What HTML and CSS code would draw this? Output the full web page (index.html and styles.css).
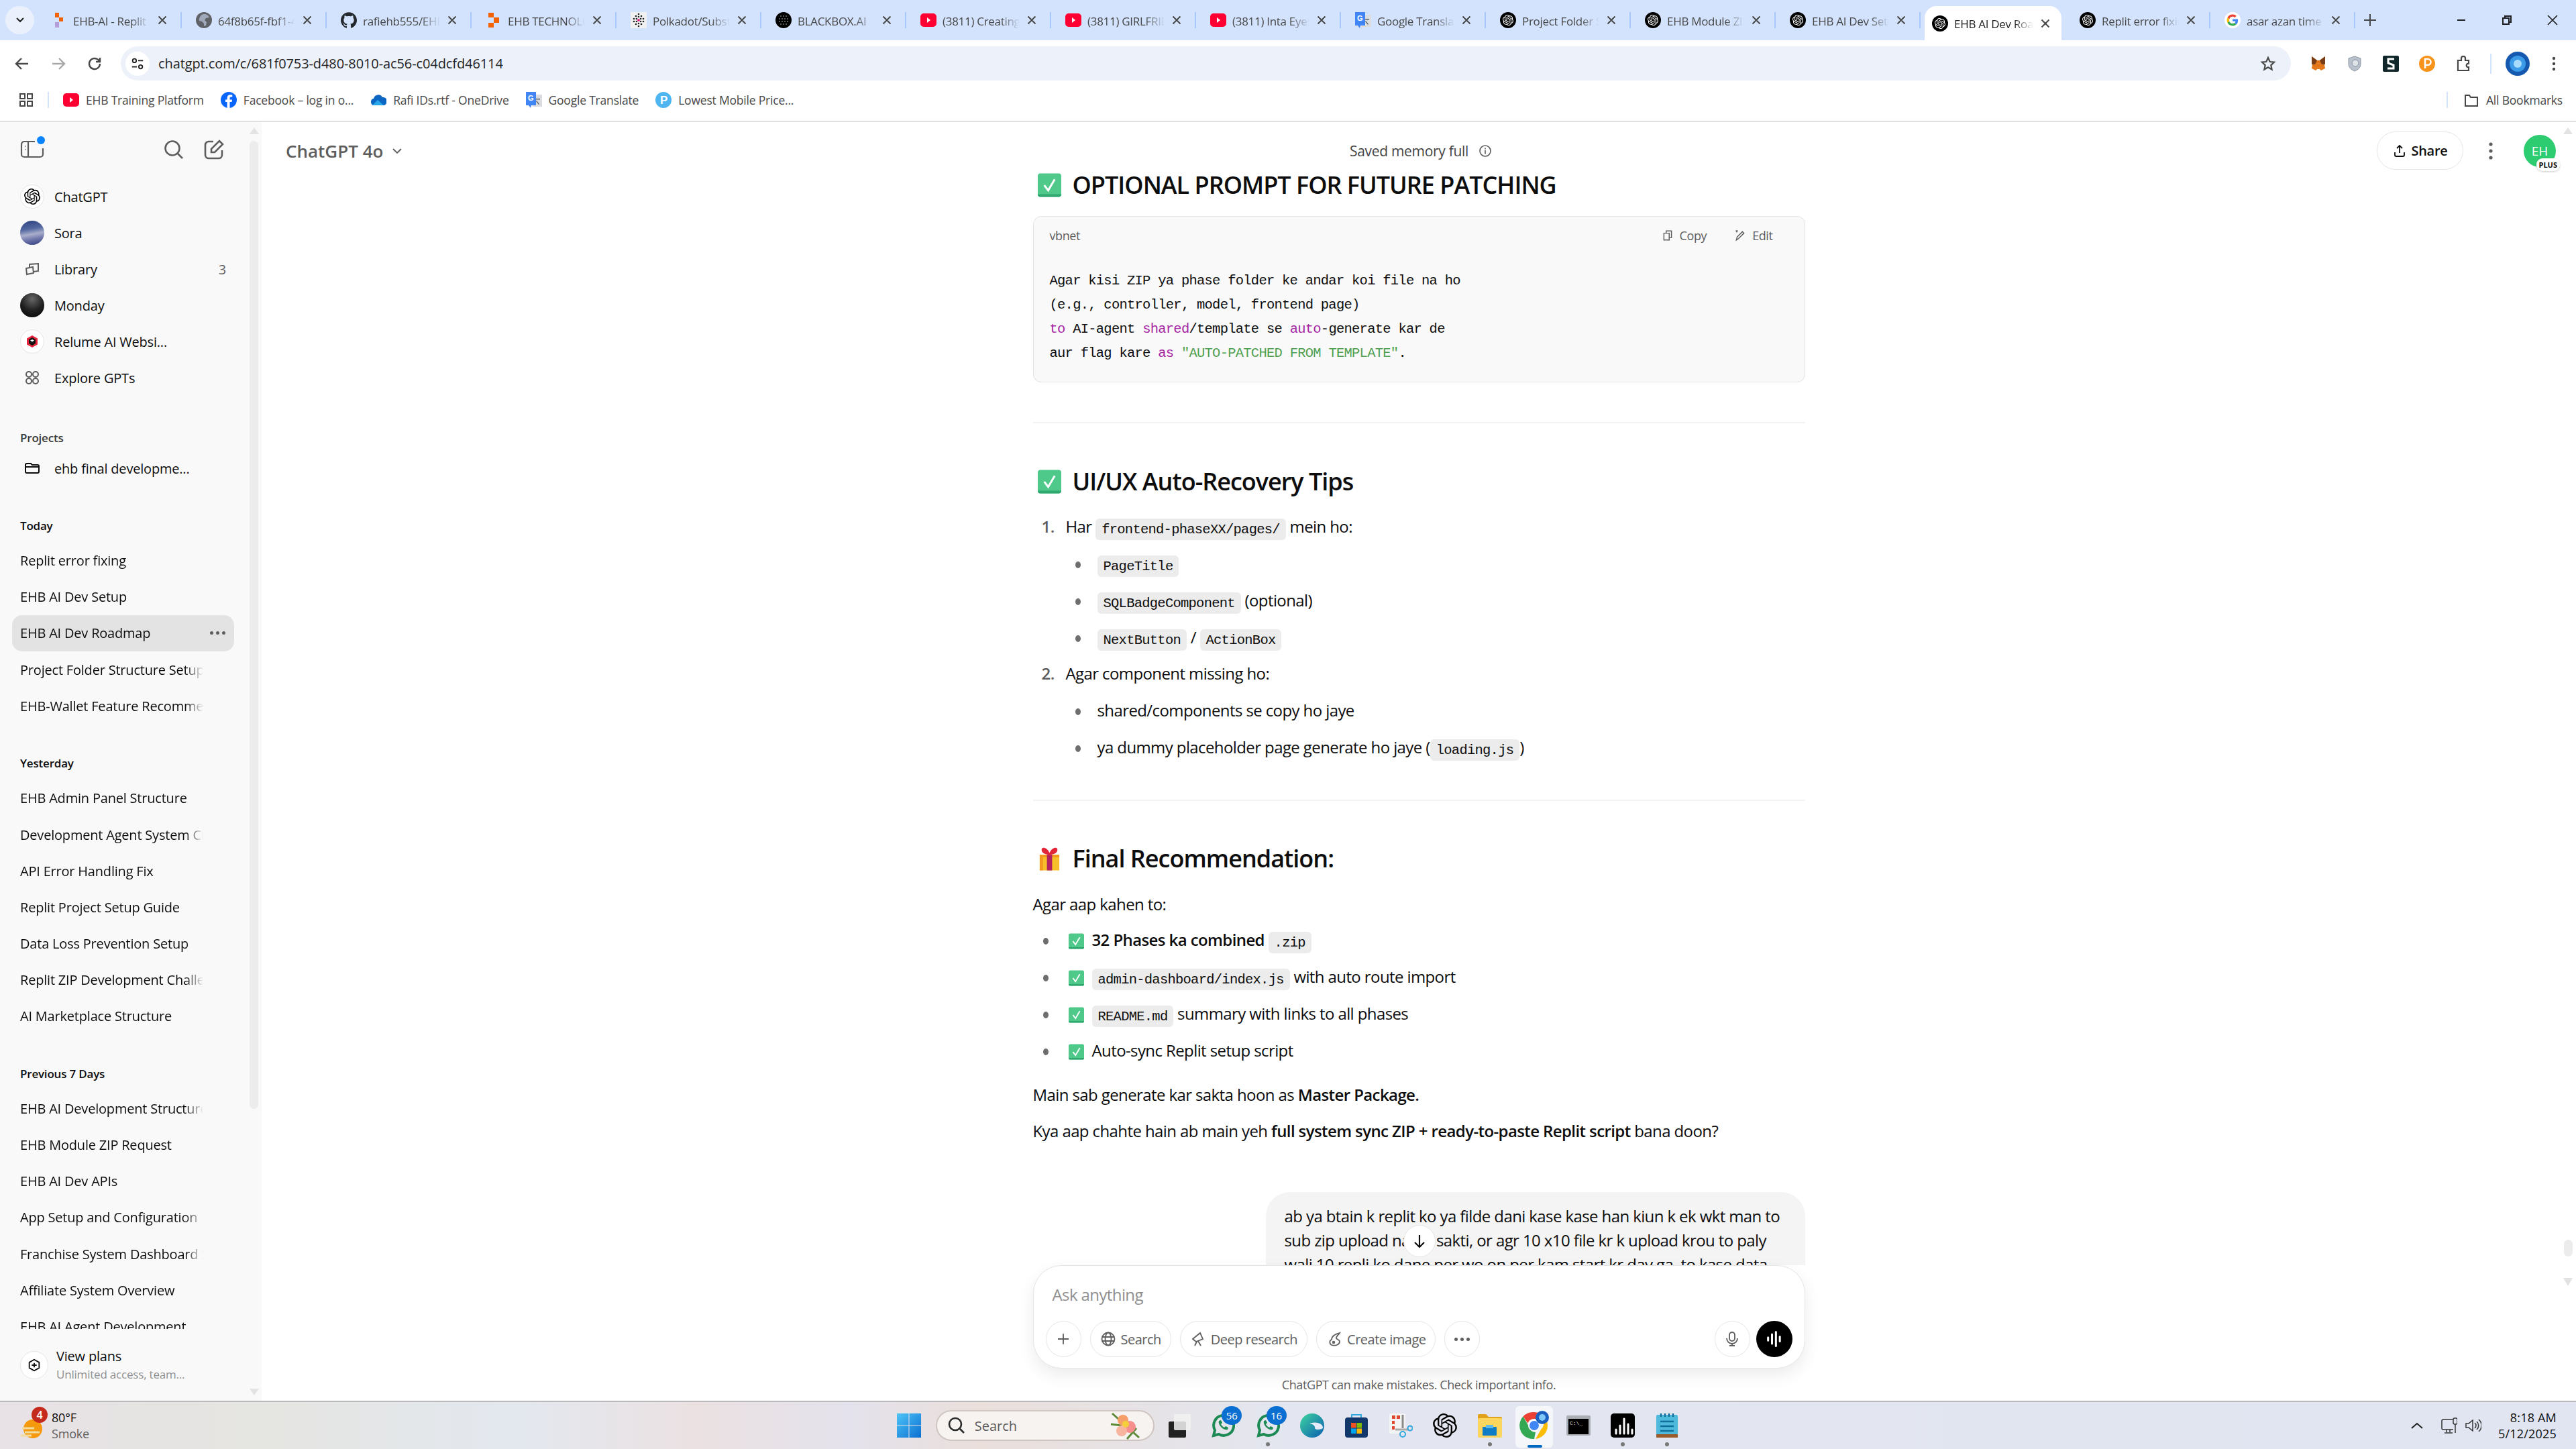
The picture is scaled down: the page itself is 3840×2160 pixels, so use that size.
FILE: index.html
```html
<!DOCTYPE html>
<html lang="en">
<head>
	<meta charset="UTF-8">
	<title>EHB AI Dev Roadmap</title>
	<link rel="stylesheet" href="styles.css">
</head>
<body>
	<!-- shared icons -->
	<svg class="defs" xmlns="http://www.w3.org/2000/svg">
		<symbol id="gpt" viewBox="0 0 24 24"><path fill-rule="evenodd" d="M22.2819 9.8211a5.9847 5.9847 0 0 0-.5157-4.9108 6.0462 6.0462 0 0 0-6.5098-2.9A6.0651 6.0651 0 0 0 4.9807 4.1818a5.9847 5.9847 0 0 0-3.9977 2.9 6.0462 6.0462 0 0 0 .7427 7.0966 5.98 5.98 0 0 0 .511 4.9107 6.051 6.051 0 0 0 6.5146 2.9001A5.9847 5.9847 0 0 0 13.2599 24a6.0557 6.0557 0 0 0 5.7718-4.2058 5.9894 5.9894 0 0 0 3.9977-2.9001 6.0557 6.0557 0 0 0-.7475-7.0729zm-9.022 12.6081a4.4755 4.4755 0 0 1-2.8764-1.0408l.1419-.0804 4.7783-2.7582a.7948.7948 0 0 0 .3927-.6813v-6.7369l2.02 1.1686a.071.071 0 0 1 .038.052v5.5826a4.504 4.504 0 0 1-4.4945 4.4944zm-9.6607-4.1254a4.4708 4.4708 0 0 1-.5346-3.0137l.142.0852 4.783 2.7582a.7712.7712 0 0 0 .7806 0l5.8428-3.3685v2.3324a.0804.0804 0 0 1-.0332.0615L9.74 19.9502a4.4992 4.4992 0 0 1-6.1408-1.6464zM2.3408 7.8956a4.485 4.485 0 0 1 2.3655-1.9728V11.6a.7664.7664 0 0 0 .3879.6765l5.8144 3.3543-2.0201 1.1685a.0757.0757 0 0 1-.071 0l-4.8303-2.7865A4.504 4.504 0 0 1 2.3408 7.872zm16.5963 3.8558L13.1038 8.364 15.1192 7.2a.0757.0757 0 0 1 .071 0l4.8303 2.7913a4.4944 4.4944 0 0 1-.6765 8.1042v-5.6772a.79.79 0 0 0-.407-.667zm2.0107-3.0231l-.142-.0852-4.7735-2.7818a.7759.7759 0 0 0-.7854 0L9.409 9.2297V6.8974a.0662.0662 0 0 1 .0284-.0615l4.8303-2.7866a4.4992 4.4992 0 0 1 6.6802 4.66zM8.3065 12.863l-2.02-1.1638a.0804.0804 0 0 1-.038-.0567V6.0742a4.4992 4.4992 0 0 1 7.3757-3.4537l-.142.0805L8.704 5.459a.7948.7948 0 0 0-.3927.6813zm1.0976-2.3654l2.602-1.4998 2.6069 1.4998v2.9994l-2.5974 1.5-2.6067-1.4997Z"/></symbol>
		<symbol id="fav-gpt" viewBox="0 0 24 24"><circle cx="12" cy="12" r="12" fill="#000"/><svg x="4" y="4" width="16" height="16" viewBox="0 0 24 24" fill="#fff"><use href="#gpt"/></svg></symbol>
		<symbol id="replit" viewBox="0 0 24 24"><path fill="#f26207" d="M4 1h8v7H4zM12 8h8v8h-8zM4 16h8v7H4z"/></symbol>
		<symbol id="replit-ai" viewBox="0 0 24 24"><path fill="#f26207" d="M6 1h6v7H6zM12 8h6v6h-6z"/><path fill="#b39ddb" d="M6 15h6v8H6z"/></symbol>
		<symbol id="globe-g" viewBox="0 0 24 24"><circle cx="12" cy="12" r="12" fill="#5f6368"/><path fill="#d3e3fd" d="M12 3c4 0 7 2 8 5l-5 1-2 3 3 3-1 5-3 1v-4l-3-3-4-1c-1-5 3-10 7-10z" opacity=".55"/></symbol>
		<symbol id="github" viewBox="0 0 24 24"><path fill="#24292f" d="M12 .297c-6.63 0-12 5.373-12 12 0 5.303 3.438 9.8 8.205 11.385.6.113.82-.258.82-.577 0-.285-.01-1.04-.015-2.04-3.338.724-4.042-1.61-4.042-1.61C4.422 18.07 3.633 17.7 3.633 17.7c-1.087-.744.084-.729.084-.729 1.205.084 1.838 1.236 1.838 1.236 1.07 1.835 2.809 1.305 3.495.998.108-.776.417-1.305.76-1.605-2.665-.3-5.466-1.332-5.466-5.93 0-1.31.465-2.38 1.235-3.22-.135-.303-.54-1.523.105-3.176 0 0 1.005-.322 3.3 1.23.96-.267 1.98-.399 3-.405 1.02.006 2.04.138 3 .405 2.28-1.552 3.285-1.23 3.285-1.23.645 1.653.24 2.873.12 3.176.765.84 1.23 1.91 1.23 3.22 0 4.61-2.805 5.625-5.475 5.92.42.36.81 1.096.81 2.22 0 1.606-.015 2.896-.03 3.286 0 .315.21.69.825.57C20.565 22.092 24 17.592 24 12.297c0-6.627-5.373-12-12-12"/></symbol>
		<symbol id="polkadot" viewBox="0 0 24 24"><rect width="24" height="24" fill="#f1f1f1"/><g fill="#222"><circle cx="12" cy="3" r="1.3"/><circle cx="8" cy="6" r="1.3"/><circle cx="16" cy="6" r="1.3"/><circle cx="12" cy="7" r="1.3"/><circle cx="5" cy="10" r="1.3"/><circle cx="9" cy="10" r="1.3"/><circle cx="15" cy="10" r="1.3"/><circle cx="19" cy="10" r="1.3"/><circle cx="5" cy="14" r="1.3"/><circle cx="9" cy="14" r="1.3"/><circle cx="15" cy="14" r="1.3"/><circle cx="19" cy="14" r="1.3"/><circle cx="8" cy="18" r="1.3"/><circle cx="16" cy="18" r="1.3"/><circle cx="12" cy="17" r="1.3"/><circle cx="12" cy="21" r="1.3"/></g><circle cx="12" cy="12" r="1.8" fill="#e6007a"/></symbol>
		<symbol id="blackbox" viewBox="0 0 24 24"><circle cx="12" cy="12" r="12" fill="#000"/><g fill="#777"><circle cx="8" cy="6" r="1"/><circle cx="12" cy="6" r="1"/><circle cx="16" cy="6" r="1"/><circle cx="6" cy="10" r="1"/><circle cx="10" cy="10" r="1"/><circle cx="14" cy="10" r="1"/><circle cx="18" cy="10" r="1"/><circle cx="6" cy="14" r="1"/><circle cx="10" cy="14" r="1"/><circle cx="14" cy="14" r="1"/><circle cx="18" cy="14" r="1"/><circle cx="8" cy="18" r="1"/><circle cx="12" cy="18" r="1"/><circle cx="16" cy="18" r="1"/></g></symbol>
		<symbol id="yt" viewBox="0 0 24 24"><rect y="2" width="24" height="20" rx="5" fill="#ff0033"/><path fill="#fff" d="M10 8l5 4-5 4z"/></symbol>
		<symbol id="translate" viewBox="0 0 24 24"><path fill="#dadce0" d="M10 4h14v18H10z"/><path fill="#5f6368" d="M14 10h7v1.5h-7zM16 13l4 5-1 1-4-5z"/><path fill="#4285f4" d="M0 0h15v20H8l-1 4-3-4H0z"/><text x="3" y="13" font-family="Liberation Sans" font-size="11" font-weight="700" fill="#fff">G</text></symbol>
		<symbol id="google" viewBox="0 0 48 48"><circle cx="24" cy="24" r="24" fill="#fff"/><g transform="translate(7 7) scale(.71)"><path fill="#EA4335" d="M24 9.5c3.54 0 6.71 1.22 9.21 3.6l6.85-6.85C35.9 2.38 30.47 0 24 0 14.62 0 6.51 5.38 2.56 13.22l7.98 6.19C12.43 13.72 17.74 9.5 24 9.5z"/><path fill="#4285F4" d="M46.98 24.55c0-1.57-.15-3.09-.38-4.55H24v9.02h12.94c-.58 2.96-2.26 5.48-4.78 7.18l7.73 6c4.51-4.18 7.09-10.36 7.09-17.65z"/><path fill="#FBBC05" d="M10.53 28.59c-.48-1.45-.76-2.99-.76-4.59s.27-3.14.76-4.59l-7.98-6.19C.92 16.46 0 20.12 0 24c0 3.88.92 7.54 2.56 10.78l7.97-6.19z"/><path fill="#34A853" d="M24 48c6.48 0 11.93-2.13 15.89-5.81l-7.73-6c-2.15 1.45-4.92 2.3-8.16 2.3-6.26 0-11.57-4.22-13.47-9.91l-7.98 6.19C6.51 42.62 14.62 48 24 48z"/></g></symbol>
		<symbol id="close" viewBox="0 0 18 18"><path fill="none" stroke="#474747" stroke-width="2" d="M3.5 3.5l11 11M14.5 3.5l-11 11"/></symbol>
		<symbol id="check" viewBox="0 0 36 36"><rect width="36" height="36" rx="4" fill="#4fc98a"/><path d="M0 32h36v0a4 4 0 0 1-4 4H4a4 4 0 0 1-4-4z" fill="#2fa86f"/><path fill="none" stroke="#fff" stroke-width="3" d="M10 18l6 8 10-17"/></symbol>
		<symbol id="gift" viewBox="0 0 36 36"><path fill="#f7c02b" d="M3 12h30v24H3z"/><path fill="#f29a1f" d="M3 12h30v4H3zM3 16h5v20H3z"/><path fill="#b5235f" d="M14 12h8v24h-8z"/><path fill="#e12637" d="M18 12C10 12 5 8 6 3c1-3 8-3 12 6 4-9 11-9 12-6 1 5-4 9-12 9z"/></symbol>
	</svg>

	<!-- browser tabs -->
	<div class="tabstrip">
		<div class="tab-search"><svg class="i14" viewBox="0 0 14 14"><path fill="none" stroke="#1f1f1f" stroke-width="2" d="M2 4l5 5 5-5"/></svg></div>
		<div class="tab"><svg class="fav"><use href="#replit-ai"/></svg><span class="tab-title">EHB-AI - Replit</span><svg class="tab-x"><use href="#close"/></svg></div>
		<div class="tab"><svg class="fav"><use href="#globe-g"/></svg><span class="tab-title">64f8b65f-fbf1-4a</span><svg class="tab-x"><use href="#close"/></svg></div>
		<div class="tab"><svg class="fav"><use href="#github"/></svg><span class="tab-title">rafiehb555/EHB</span><svg class="tab-x"><use href="#close"/></svg></div>
		<div class="tab"><svg class="fav"><use href="#replit"/></svg><span class="tab-title">EHB TECHNOLOGY</span><svg class="tab-x"><use href="#close"/></svg></div>
		<div class="tab"><svg class="fav"><use href="#polkadot"/></svg><span class="tab-title">Polkadot/Substrate</span><svg class="tab-x"><use href="#close"/></svg></div>
		<div class="tab"><svg class="fav"><use href="#blackbox"/></svg><span class="tab-title">BLACKBOX.AI</span><svg class="tab-x"><use href="#close"/></svg></div>
		<div class="tab"><svg class="fav"><use href="#yt"/></svg><span class="tab-title">(3811) Creating</span><svg class="tab-x"><use href="#close"/></svg></div>
		<div class="tab"><svg class="fav"><use href="#yt"/></svg><span class="tab-title">(3811) GIRLFRIEND</span><svg class="tab-x"><use href="#close"/></svg></div>
		<div class="tab"><svg class="fav"><use href="#yt"/></svg><span class="tab-title">(3811) Inta Eyes</span><svg class="tab-x"><use href="#close"/></svg></div>
		<div class="tab"><svg class="fav"><use href="#translate"/></svg><span class="tab-title">Google Translate</span><svg class="tab-x"><use href="#close"/></svg></div>
		<div class="tab"><svg class="fav"><use href="#fav-gpt"/></svg><span class="tab-title">Project Folder St</span><svg class="tab-x"><use href="#close"/></svg></div>
		<div class="tab"><svg class="fav"><use href="#fav-gpt"/></svg><span class="tab-title">EHB Module ZIP</span><svg class="tab-x"><use href="#close"/></svg></div>
		<div class="tab"><svg class="fav"><use href="#fav-gpt"/></svg><span class="tab-title">EHB AI Dev Setup</span><svg class="tab-x"><use href="#close"/></svg></div>
		<div class="tab tab-active"><svg class="fav"><use href="#fav-gpt"/></svg><span class="tab-title">EHB AI Dev Roadmap</span><svg class="tab-x"><use href="#close"/></svg></div>
		<div class="tab"><svg class="fav"><use href="#fav-gpt"/></svg><span class="tab-title">Replit error fixing</span><svg class="tab-x"><use href="#close"/></svg></div>
		<div class="tab"><svg class="fav"><use href="#google"/></svg><span class="tab-title">asar azan time</span><svg class="tab-x"><use href="#close"/></svg></div>
		<svg class="new-tab" viewBox="0 0 24 24"><path fill="none" stroke="#474747" stroke-width="2" d="M12 3v18M3 12h18"/></svg>
		<div class="win-btns">
			<svg viewBox="0 0 18 18"><path stroke="#1f1f1f" stroke-width="2" d="M3 9h12"/></svg>
			<svg viewBox="0 0 18 18"><path fill="none" stroke="#1f1f1f" stroke-width="2" d="M3 6h9v9H3zM6 6V3h9v9h-3"/></svg>
			<svg viewBox="0 0 18 18"><path fill="none" stroke="#1f1f1f" stroke-width="1.6" d="M2 2l14 14M16 2L2 16"/></svg>
		</div>
	</div>

	<!-- address bar -->
	<div class="toolbar">
		<div class="tb-btn"><svg viewBox="0 0 24 24"><path fill="none" stroke="#474747" stroke-width="2.4" d="M21 12H4M11 4l-8 8 8 8"/></svg></div>
		<div class="tb-btn"><svg viewBox="0 0 24 24"><path fill="none" stroke="#a8a8a8" stroke-width="2.4" d="M3 12h17M13 4l8 8-8 8"/></svg></div>
		<div class="tb-btn"><svg viewBox="0 0 24 24"><path fill="none" stroke="#474747" stroke-width="2.4" d="M20 12a8 8 0 1 1-2.5-5.8L20 8.500M20 3v6h-6"/></svg></div>
		<div class="omnibox">
			<div class="site-info"><svg viewBox="0 0 24 24"><g fill="none" stroke="#1f1f1f" stroke-width="2"><circle cx="7" cy="7" r="3"/><circle cx="17" cy="17" r="3"/><path d="M13 7h8M3 17h8"/></g></svg></div>
			<span class="url">chatgpt.com/c/681f0753-d480-8010-ac56-c04dcfd46114</span>
			<svg class="star" viewBox="0 0 24 24"><path fill="none" stroke="#474747" stroke-width="2.200" d="M12 3l2.700 6 6.300.700-4.700 4.400 1.300 6.400-5.600-3.300-5.600 3.300 1.300-6.400L3 9.700 9.300 9z"/></svg>
		</div>
		<div class="extensions">
			<div class="tb-btn"><svg viewBox="0 0 24 24"><path fill="#e2761b" d="M2 1l8 6h4l8-6-1 12 1 6-6 3-2-2h-4l-2 2-6-3 1-6z"/><path fill="#763d16" d="M2 1l8 6-3 6-5 0zM22 1l-8 6 3 6 5 0z"/></svg></div>
			<div class="tb-btn"><svg viewBox="0 0 24 24"><path fill="#b9c1cc" stroke="#8a94a3" d="M12 1l9 3v8c0 6-4 9-9 11-5-2-9-5-9-11V4z"/><circle cx="13" cy="11" r="5" fill="#dfe3e8" stroke="#8a94a3"/></svg></div>
			<div class="tb-btn"><svg viewBox="0 0 24 24"><rect width="24" height="24" rx="2" fill="#10282a"/><path fill="none" stroke="#fff" stroke-width="3" d="M17 5H8v6l8 3v5H7"/></svg></div>
			<div class="tb-btn"><svg viewBox="0 0 24 24"><circle cx="12" cy="12" r="12" fill="#f7931a"/><path fill="none" stroke="#fff" stroke-width="2.600" d="M9 19V5h4a4 4 0 0 1 0 9H9"/></svg></div>
			<div class="tb-btn"><svg viewBox="0 0 24 24"><path fill="none" stroke="#474747" stroke-width="2.200" d="M4 7h5V4a3 3 0 0 1 6 0v3h5v5h-2a3 3 0 0 0 0 5h2v5H4z"/></svg></div>
			<i class="tb-sep"></i>
			<div class="tb-btn"><svg class="profile" viewBox="0 0 36 36"><circle cx="18" cy="18" r="18" fill="#1558b0"/><circle cx="18" cy="18" r="12" fill="#3b9be8"/><circle cx="18" cy="18" r="6" fill="#a8dcff"/></svg></div>
			<div class="tb-btn"><svg viewBox="0 0 24 24"><g fill="#474747"><circle cx="12" cy="4" r="2.200"/><circle cx="12" cy="12" r="2.200"/><circle cx="12" cy="20" r="2.200"/></g></svg></div>
		</div>
	</div>

	<!-- bookmarks -->
	<div class="bookmarks">
		<svg class="bm-apps" viewBox="0 0 24 24"><path fill="none" stroke="#474747" stroke-width="2" d="M3 3h7v7H3zM14 3h7v7h-7zM3 14h7v7H3zM14 14h7v7h-7z"/></svg>
		<i class="bm-sep"></i>
		<div class="bm"><svg class="fav"><use href="#yt"/></svg>EHB Training Platform</div>
		<div class="bm"><svg class="fav" viewBox="0 0 24 24"><circle cx="12" cy="12" r="12" fill="#0866ff"/><path fill="#fff" d="M13.500 24v-9h3l.6-3.500h-3.600V9.600c0-1.200.5-2 2-2h1.800V4.500c-1-.2-2-.3-3-.3-3 0-4.700 1.800-4.700 4.900v2.400H7V15h2.600v9z"/></svg>Facebook – log in o...</div>
		<div class="bm"><svg class="fav" viewBox="0 0 24 24"><path fill="#0a66c2" d="M6 20a5 5 0 0 1-1-9.900A7 7 0 0 1 18 8a6 6 0 0 1 2 12z"/><path fill="#28a8ea" d="M3 20l8-8 9 8z"/></svg>Rafi IDs.rtf - OneDrive</div>
		<div class="bm"><svg class="fav"><use href="#translate"/></svg>Google Translate</div>
		<div class="bm"><svg class="fav" viewBox="0 0 24 24"><circle cx="12" cy="12" r="12" fill="#4fb5f0"/><text x="7" y="18" font-family="Liberation Sans" font-size="17" font-weight="700" fill="#fff">P</text></svg>Lowest Mobile Price...</div>
		<i class="bm-sep bm-sep-end"></i>
		<div class="bm bm-all"><svg class="fav" viewBox="0 0 24 24"><path fill="none" stroke="#474747" stroke-width="2" d="M3 5h6l2 3h10v13H3z"/></svg>All Bookmarks</div>
	</div>

	<div class="app">
		<!-- sidebar -->
		<aside class="sidebar">
			<div class="side-head">
				<div class="toggle">
					<svg viewBox="0 0 36 27"><path fill="none" stroke="#5d5d5d" stroke-width="2.200" d="M22 2H6a4 4 0 0 0-4 4v15a4 4 0 0 0 4 4h24a4 4 0 0 0 4-4v-9M12 2v23M7 9h1M7 14h1"/></svg>
					<i class="toggle-dot"></i>
				</div>
				<svg class="side-search" viewBox="0 0 30 30"><circle cx="13" cy="13" r="10.500" fill="none" stroke="#5d5d5d" stroke-width="2.600"/><path stroke="#5d5d5d" stroke-width="2.600" d="M21 21l7 7"/></svg>
				<svg class="side-new" viewBox="0 0 30 30"><path fill="none" stroke="#5d5d5d" stroke-width="2.600" d="M14 3H7a5 5 0 0 0-5 5v15a5 5 0 0 0 5 5h15a5 5 0 0 0 5-5v-7M11 19v-5L23 2l5 5-12 12z"/></svg>
			</div>
			<div class="side-scroll">
				<div class="row"><span class="row-icon ring"><svg viewBox="0 0 24 24"><use href="#gpt"/></svg></span>ChatGPT</div>
				<div class="row"><span class="row-icon sora"></span>Sora</div>
				<div class="row"><span class="row-icon"><svg viewBox="0 0 24 24"><path fill="none" stroke="#5d5d5d" stroke-width="2" d="M3 11l10-2 1 9-10 2zM8 9V5l13-1v11l-7 1"/></svg></span>Library<span class="row-count">3</span></div>
				<div class="row"><span class="row-icon monday"></span>Monday</div>
				<div class="row"><span class="row-icon ring"><svg viewBox="0 0 24 24"><path fill="#e5243b" d="M12 3l8 4.500v9L12 21l-8-4.500v-9z"/><path fill="#111" d="M12 6l5 3v6l-5 3-5-3V9z"/><path fill="#fff" d="M12 9l3 1.500-3 2-3-2z"/></svg></span>Relume AI Websi...</div>
				<div class="row"><span class="row-icon"><svg viewBox="0 0 24 24"><g fill="none" stroke="#5d5d5d" stroke-width="2"><circle cx="7" cy="7" r="4"/><circle cx="17" cy="7" r="4"/><circle cx="7" cy="17" r="4"/><circle cx="17" cy="17" r="4"/></g></svg></span>Explore GPTs</div>

				<div class="label label-projects">Projects</div>
				<div class="row"><span class="row-icon"><svg viewBox="0 0 24 24"><path fill="none" stroke="#0d0d0d" stroke-width="2" d="M2 7a2 2 0 0 1 2-2h6l2 2h8a2 2 0 0 1 2 2v8a2 2 0 0 1-2 2H4a2 2 0 0 1-2-2zM2 10h20"/></svg></span>ehb final developme...</div>

				<div class="label">Today</div>
				<div class="chat"><span class="chat-text">Replit error fixing</span></div>
				<div class="chat"><span class="chat-text">EHB AI Dev Setup</span></div>
				<div class="chat chat-active"><span class="chat-text">EHB AI Dev Roadmap</span><span class="chat-more"><i></i><i></i><i></i></span></div>
				<div class="chat"><span class="chat-text">Project Folder Structure Setup</span></div>
				<div class="chat"><span class="chat-text">EHB-Wallet Feature Recommendations</span></div>

				<div class="label">Yesterday</div>
				<div class="chat"><span class="chat-text">EHB Admin Panel Structure</span></div>
				<div class="chat"><span class="chat-text">Development Agent System Creation</span></div>
				<div class="chat"><span class="chat-text">API Error Handling Fix</span></div>
				<div class="chat"><span class="chat-text">Replit Project Setup Guide</span></div>
				<div class="chat"><span class="chat-text">Data Loss Prevention Setup</span></div>
				<div class="chat"><span class="chat-text">Replit ZIP Development Challenges</span></div>
				<div class="chat"><span class="chat-text">AI Marketplace Structure</span></div>

				<div class="label">Previous 7 Days</div>
				<div class="chat"><span class="chat-text">EHB AI Development Structure</span></div>
				<div class="chat"><span class="chat-text">EHB Module ZIP Request</span></div>
				<div class="chat"><span class="chat-text">EHB AI Dev APIs</span></div>
				<div class="chat"><span class="chat-text">App Setup and Configuration</span></div>
				<div class="chat"><span class="chat-text">Franchise System Dashboard Setup</span></div>
				<div class="chat"><span class="chat-text">Affiliate System Overview</span></div>
				<div class="chat"><span class="chat-text">EHB AI Agent Development</span></div>
			</div>
			<div class="side-foot">
				<span class="plans-icon"><svg viewBox="0 0 24 24"><path fill="none" stroke="#0d0d0d" stroke-width="2" d="M12 3l8 4.500v9L12 21l-8-4.500v-9zM8 12h8M12 8.500v7"/></svg></span>
				<div>
					<div class="plans-title">View plans</div>
					<div class="plans-sub">Unlimited access, team...</div>
				</div>
			</div>
			<i class="sb-arrow-up"></i>
			<i class="sb-thumb"></i>
			<i class="sb-arrow-down"></i>
		</aside>

		<main class="chat-main">
			<header class="chat-head">
				<div class="model">ChatGPT 4o <svg viewBox="0 0 18 18"><path fill="none" stroke="#5d5d5d" stroke-width="1.800" d="M3 6l6 6 6-6"/></svg></div>
				<div class="memory">Saved memory full <svg viewBox="0 0 20 20"><g fill="none" stroke="#5d5d5d" stroke-width="1.600"><circle cx="10" cy="10" r="8"/><path d="M10 9v5.500M10 5.500v2"/></g></svg></div>
				<div class="head-right">
					<div class="share"><svg viewBox="0 0 20 20"><path fill="none" stroke="#0d0d0d" stroke-width="1.800" d="M10 13V3M6 6l4-4 4 4M3 12v4a2 2 0 0 0 2 2h10a2 2 0 0 0 2-2v-4"/></svg>Share</div>
					<svg class="head-kebab" viewBox="0 0 8 28"><g fill="#5d5d5d"><circle cx="4" cy="4" r="2.600"/><circle cx="4" cy="14" r="2.600"/><circle cx="4" cy="24" r="2.600"/></g></svg>
					<div class="user">EH<span class="plus">PLUS</span></div>
				</div>
			</header>

			<div class="thread">
				<div class="col">
					<h3><svg class="emoji"><use href="#check"/></svg>OPTIONAL PROMPT FOR FUTURE PATCHING</h3>
					<div class="code-block">
						<div class="code-top">
							<span>vbnet</span>
							<span class="code-actions">
								<span class="code-act"><svg viewBox="0 0 16 16"><path fill="none" stroke="#5d5d5d" stroke-width="1.300" d="M3 5h7v9H3zM6 5V2h7v9h-3"/></svg>Copy</span>
								<span class="code-act"><svg viewBox="0 0 16 16"><path fill="none" stroke="#5d5d5d" stroke-width="1.300" d="M3 14l1-4 7-7 2 2-7 7zM2 2h3M3.500 1v3"/></svg>Edit</span>
							</span>
						</div>
<pre class="code-body">Agar kisi ZIP ya phase folder ke andar koi file na ho
(e.g., controller, model, frontend page)
<span class="kw">to</span> AI-agent <span class="kw">shared</span>/template se <span class="kw">auto</span>-generate kar de
aur flag kare <span class="kw">as</span> <span class="str">"AUTO-PATCHED FROM TEMPLATE"</span>.</pre>
					</div>
					<hr>
					<h3><svg class="emoji"><use href="#check"/></svg>UI/UX Auto-Recovery Tips</h3>
					<ol class="steps">
						<li>Har <code>frontend-phaseXX/pages/</code> mein ho:
							<ul>
								<li><code>PageTitle</code></li>
								<li><code>SQLBadgeComponent</code> (optional)</li>
								<li><code>NextButton</code> / <code>ActionBox</code></li>
							</ul>
						</li>
						<li>Agar component missing ho:
							<ul>
								<li>shared/components se copy ho jaye</li>
								<li>ya dummy placeholder page generate ho jaye (<code>loading.js</code>)</li>
							</ul>
						</li>
					</ol>
					<hr class="hr-second">
					<h3><svg class="emoji"><use href="#gift"/></svg>Final Recommendation:</h3>
					<p class="intro">Agar aap kahen to:</p>
					<ul class="offers">
						<li><svg class="emoji-sm"><use href="#check"/></svg><b>32 Phases ka combined</b> <code>.zip</code></li>
						<li><svg class="emoji-sm"><use href="#check"/></svg><code>admin-dashboard/index.js</code> with auto route import</li>
						<li><svg class="emoji-sm"><use href="#check"/></svg><code>README.md</code> summary with links to all phases</li>
						<li><svg class="emoji-sm"><use href="#check"/></svg>Auto-sync Replit setup script</li>
					</ul>
					<p class="para-a">Main sab generate kar sakta hoon as <b>Master Package.</b></p>
					<p class="para-b">Kya aap chahte hain ab main yeh <b>full system sync ZIP + ready-to-paste Replit script</b> bana doon?</p>
					<div class="bubble">ab ya btain k replit ko ya filde dani kase kase han kiun k ek wkt man to<br>sub zip upload na ho sakti, or agr 10 x10 file kr k upload krou to paly<br>wali 10 repli ko dane per wo on per kam start kr day ga, to kase data</div>
				</div>
			</div>

			<div class="composer">
				<div class="scroll-down"><svg viewBox="0 0 24 24"><path fill="none" stroke="#0d0d0d" stroke-width="2.200" d="M12 3v18M5 14l7 7 7-7"/></svg></div>
				<div class="placeholder">Ask anything</div>
				<div class="tools">
					<div class="pill pill-round"><svg viewBox="0 0 24 24"><path fill="none" stroke="#5d5d5d" stroke-width="1.800" d="M12 4v16M4 12h16"/></svg></div>
					<div class="pill"><svg viewBox="0 0 24 24"><g fill="none" stroke="#5d5d5d" stroke-width="1.800"><circle cx="12" cy="12" r="9.500"/><ellipse cx="12" cy="12" rx="4.500" ry="9.500"/><path d="M3 9h18M3 15h18"/></g></svg>Search</div>
					<div class="pill"><svg viewBox="0 0 24 24"><g fill="none" stroke="#5d5d5d" stroke-width="1.800"><path d="M4 12l11-9 4 9-10 4zM10 16l-3 6M12 15l4 7"/></g></svg>Deep research</div>
					<div class="pill"><svg viewBox="0 0 24 24"><g fill="none" stroke="#5d5d5d" stroke-width="1.800"><path d="M20 3C12 5 8 9 8 13c-4 1-3 7 0 8 6 2 12-1 12-5 0-3-4-3-5-5s3-5 5-8z"/><circle cx="11" cy="17" r="1.300"/></g></svg>Create image</div>
					<div class="pill pill-round"><span class="dots"><i></i><i></i><i></i></span></div>
					<div class="tools-right">
						<div class="pill pill-round"><svg viewBox="0 0 24 24"><g fill="none" stroke="#5d5d5d" stroke-width="1.800"><rect x="8" y="2" width="8" height="13" rx="4"/><path d="M4 11a8 8 0 0 0 16 0M12 19v3M8 22h8"/></g></svg></div>
						<div class="send"><svg viewBox="0 0 24 24"><path stroke="#fff" stroke-width="2.600" stroke-linecap="round" d="M4 10v4M9 6v12M14 3v18M19 9v6"/></svg></div>
					</div>
				</div>
			</div>
			<div class="footnote">ChatGPT can make mistakes. Check important info.</div>

			<i class="page-arrow-up"></i>
			<i class="page-thumb"></i>
			<i class="page-arrow-down"></i>
		</main>
	</div>

	<!-- windows taskbar -->
	<footer class="taskbar">
		<div class="weather">
			<span class="weather-icon">
				<svg viewBox="0 0 32 30"><circle cx="18" cy="15" r="14" fill="#f59a0c"/><path stroke="#f2dca0" stroke-width="3" d="M2 14h18M6 20h22M0 25h16"/></svg>
				<span class="weather-badge">4</span>
			</span>
			<div>
				<div class="temp">80°F</div>
				<div class="cond">Smoke</div>
			</div>
		</div>
		<div class="task-slot">
			<svg class="t-icon" viewBox="0 0 36 36"><defs><linearGradient id="win" x1="0" y1="0" x2="1" y2="1"><stop offset="0" stop-color="#4fc4f7"/><stop offset="1" stop-color="#0a6fd1"/></linearGradient></defs><path fill="url(#win)" d="M0 0h17.500v17.500H0zM18.500 0H36v17.500H18.500zM0 18.500h17.500V36H0zM18.500 18.500H36V36H18.500z"/></svg>
		</div>
		<div class="task-search">
			<svg class="q" viewBox="0 0 26 26"><circle cx="11" cy="11" r="9" fill="none" stroke="#2b2b2b" stroke-width="2.600"/><path stroke="#2b2b2b" stroke-width="2.600" d="M17 17l7 7"/></svg>
			<span>Search</span>
			<svg class="flower" viewBox="0 0 50 44"><path stroke="#5e8a3a" stroke-width="3" d="M4 4l40 36M40 26l-14 16M2 20l16 2"/><circle cx="20" cy="14" r="8" fill="#f5a06a"/><circle cx="30" cy="24" r="9" fill="#f78f8f"/><circle cx="18" cy="30" r="8" fill="#f7b5a0"/><circle cx="24" cy="20" r="5" fill="#f4cf3a"/></svg>
		</div>
		<div class="task-slot"><svg class="t-icon" viewBox="0 0 36 36"><rect x="3" y="12" width="26" height="24" rx="2" fill="#222"/><rect x="11" y="1" width="25" height="24" rx="2" fill="#f2f2f2" opacity=".85"/></svg></div>
		<div class="task-slot">
			<svg class="t-icon" viewBox="0 0 36 36"><path fill="none" stroke="#1d8a54" stroke-width="4" d="M4 33l2-8a15 15 0 1 1 6 6z"/><path fill="#1d8a54" d="M12 11l3-1 2 4-2 2c1 2 3 4 5 5l2-2 4 2-1 3c-6 2-15-7-13-13z"/></svg>
			<span class="count">56</span>
		</div>
		<div class="task-slot">
			<svg class="t-icon" viewBox="0 0 36 36"><path fill="none" stroke="#1d8a54" stroke-width="4" d="M4 33l2-8a15 15 0 1 1 6 6z"/><path fill="#1d8a54" d="M12 11l3-1 2 4-2 2c1 2 3 4 5 5l2-2 4 2-1 3c-6 2-15-7-13-13z"/></svg>
			<span class="count">16</span><i class="run-dot"></i>
		</div>
		<div class="task-slot"><svg class="t-icon" viewBox="0 0 36 36"><defs><linearGradient id="edge" x1="0" y1="0" x2="1" y2="1"><stop offset="0" stop-color="#3ed6a0"/><stop offset="1" stop-color="#0b5cb0"/></linearGradient></defs><circle cx="18" cy="18" r="18" fill="url(#edge)"/><path fill="#e4ebf6" d="M14 16c6-5 20-2 20 5 0 2-3 3-8 3-3 0-4-1-4-3 0-4-5-6-8-5z"/></svg></div>
		<div class="task-slot"><svg class="t-icon" viewBox="0 0 36 36"><path fill="none" stroke="#2fa7e0" stroke-width="2" d="M11 6V2h14v4"/><rect x="1" y="6" width="34" height="30" rx="4" fill="#12386b"/><path fill="#f25022" d="M10 14h7.500v7.500H10z"/><path fill="#7fba00" d="M18.500 14H26v7.500h-7.500z"/><path fill="#00a4ef" d="M10 22.500h7.500V30H10z"/><path fill="#ffb900" d="M18.500 22.500H26V30h-7.500z"/></svg></div>
		<div class="task-slot"><svg class="t-icon" viewBox="0 0 36 36"><rect x="1" width="24" height="30" rx="2" fill="#f4f4f4"/><path fill="#e0492f" d="M5 3h5v5H5zM12 3h5v5h-5zM5 11h4v5H5zM5 19h4v5H5z"/><path stroke="#8a8a8a" stroke-width="3" d="M21 2v20"/><path stroke="#aaa" stroke-width="3" d="M10 24h20"/><circle cx="21" cy="31" r="4" fill="none" stroke="#2fa7e0" stroke-width="2"/><circle cx="32" cy="22" r="3.500" fill="none" stroke="#2fa7e0" stroke-width="2"/></svg></div>
		<div class="task-slot"><svg class="t-icon" viewBox="0 0 24 24"><use href="#gpt"/></svg></div>
		<div class="task-slot">
			<svg class="t-icon" viewBox="0 0 36 36"><path fill="#e0a21b" d="M0 3a2 2 0 0 1 2-2h10l4 4h18a2 2 0 0 1 2 2v3H0z"/><rect y="7" width="36" height="29" rx="2" fill="#fcd55f"/><rect x="7" y="20" width="21" height="13" rx="1" fill="#0f7cc6"/><path fill="#5db9ea" d="M12 17h11v5H12z"/></svg>
			<i class="run-dot"></i>
		</div>
		<div class="task-slot task-active">
			<svg class="t-icon chrome" viewBox="0 0 44 44"><path fill="#ea4335" d="M22 2a20 20 0 0 1 17.300 10H22a10 10 0 0 0-9.500 6.800L5.500 8.500A20 20 0 0 1 22 2z"/><path fill="#fbbc05" d="M39.300 12A20 20 0 0 1 24 42l8.600-15a10 10 0 0 0 0-15z"/><path fill="#34a853" d="M5.500 8.500l8.600 15A10 10 0 0 0 24 32l-2 10A20 20 0 0 1 5.500 8.500z"/><circle cx="22" cy="22" r="8" fill="#4285f4" stroke="#fff" stroke-width="2"/><circle cx="34" cy="10" r="10" fill="#1a5fc0"/><circle cx="34" cy="10" r="5" fill="#7fc7f7"/></svg>
			<i class="run-bar"></i>
		</div>
		<div class="task-slot"><svg class="t-icon" viewBox="0 0 36 36"><rect y="3" width="36" height="30" rx="2" fill="#a9aeb4"/><rect x="3" y="8" width="30" height="23" fill="#000"/><text x="5" y="17" font-family="Liberation Mono" font-size="8" fill="#ddd">C:\_</text></svg></div>
		<div class="task-slot">
			<svg class="t-icon" viewBox="0 0 36 36"><rect width="36" height="36" rx="5" fill="#000"/><path stroke="#fff" stroke-width="3" stroke-linecap="round" d="M8 24v6M14 18v12M20 8v22M26 16v14M32 24v6"/></svg>
			<i class="run-dot"></i>
		</div>
		<div class="task-slot">
			<svg class="t-icon" viewBox="0 0 32 36"><rect y="2" width="32" height="30" rx="2" fill="#4fb9dc"/><path fill="#9a5a2a" d="M0 31h32v5H0z"/><path stroke="#0f6f9a" stroke-width="2.400" d="M7 0v5M13 0v5M19 0v5M25 0v5M6 12h20M6 19h20M6 26h20"/></svg>
			<i class="run-dot"></i>
		</div>
		<div class="tray">
			<svg class="tray-up" viewBox="0 0 18 10"><path fill="none" stroke="#1f1f1f" stroke-width="2" d="M1 9l8-7 8 7"/></svg>
			<svg class="tray-net" viewBox="0 0 24 24"><path fill="none" stroke="#333" stroke-width="1.500" d="M17 3H3a2 2 0 0 0-2 2v11a2 2 0 0 0 2 2h15M8 18v4M13 18v4M5 23h12M21 10v13"/><rect x="18" y="1" width="6" height="9" rx="2" fill="none" stroke="#333" stroke-width="1.500"/></svg>
			<svg class="tray-vol" viewBox="0 0 24 24"><path fill="none" stroke="#333" stroke-width="1.500" d="M1 9v6h4l6 5V4L5 9zM14 8a5 5 0 0 1 0 8M17 6a8 8 0 0 1 0 12M20 3a12 12 0 0 1 0 18"/></svg>
			<div class="clock"><div>8:18 AM</div><div>5/12/2025</div></div>
		</div>
	</footer>
</body>
</html>
```

FILE: styles.css
```css
* {
	box-sizing: border-box;
}
html, body {
	height: 100%;
}
body {
	margin: 0;
	width: 3840px;
	height: 2160px;
	display: flex;
	flex-direction: column;
	overflow: hidden;
	background: #fff;
	color: #0d0d0d;
	font-family: "Open Sans", "Liberation Sans", sans-serif;
	font-size: 24px;
}
svg {
	display: block;
	flex: none;
}
.defs {
	width: 0;
	height: 0;
	position: absolute;
}

/* tab strip */
.tabstrip {
	height: 60px;
	flex: none;
	display: flex;
	align-items: center;
	background: #d3e3fd;
}
.tab-search {
	width: 43px;
	height: 42px;
	margin: 0 4px 0 8px;
	border-radius: 21px;
	background: #eaf1fd;
	display: flex;
	align-items: center;
	justify-content: center;
}
.i14 {
	width: 14px;
	height: 14px;
}
.tab {
	width: 216px;
	height: 60px;
	flex: none;
	padding: 0 20px 0 21px;
	display: flex;
	align-items: center;
	gap: 9px;
	position: relative;
	color: #474747;
	font-size: 17px;
	letter-spacing: -0.3px;
}
.tab::after {
	content: "";
	position: absolute;
	right: 0;
	top: 18px;
	width: 2px;
	height: 24px;
	background: #a8c7fa;
}
.tab-active {
	width: 204px;
	height: 51px;
	margin: 9px 6px 0;
	padding: 0 15px 0 11px;
	border-radius: 18px 18px 0 0;
	background: #fff;
	color: #1f1f1f;
}
.tab-active::after {
	display: none;
}
.fav {
	width: 24px;
	height: 24px;
}
.tab-title {
	flex: 1;
	min-width: 0;
	padding-top: 2px;
	overflow: hidden;
	white-space: nowrap;
	-webkit-mask-image: linear-gradient(to right, #000 75%, transparent);
	mask-image: linear-gradient(to right, #000 75%, transparent);
}
.tab-x {
	width: 18px;
	height: 18px;
}
.new-tab {
	width: 24px;
	height: 24px;
	margin-left: 10px;
}
.win-btns {
	margin-left: auto;
	margin-right: 26px;
	display: flex;
	gap: 50px;
}
.win-btns svg {
	width: 18px;
	height: 18px;
}

/* toolbar */
.toolbar {
	height: 66px;
	flex: none;
	padding: 3px 6px 0;
	display: flex;
	align-items: center;
	background: #fff;
}
.tb-btn {
	width: 54px;
	height: 54px;
	flex: none;
	display: flex;
	align-items: center;
	justify-content: center;
}
.tb-btn svg {
	width: 24px;
	height: 24px;
}
.tb-btn svg.profile {
	width: 36px;
	height: 36px;
}
.omnibox {
	flex: 1;
	height: 51px;
	margin-left: 12px;
	padding: 0 22px 0 7px;
	border-radius: 26px;
	background: #edf2fa;
	display: flex;
	align-items: center;
}
.site-info {
	width: 36px;
	height: 36px;
	margin-right: 13px;
	border-radius: 50%;
	background: #fff;
	display: flex;
	align-items: center;
	justify-content: center;
}
.site-info svg {
	width: 22px;
	height: 22px;
}
.url {
	font-size: 20px;
	letter-spacing: -0.1px;
	color: #1f1f1f;
}
.star {
	width: 24px;
	height: 24px;
	margin-left: auto;
}
.extensions {
	display: flex;
	align-items: center;
	margin-left: 14px;
}
.tb-sep {
	width: 2px;
	height: 30px;
	margin: 0 12px 0 13px;
	background: #d3e3fd;
}

/* bookmarks */
.bookmarks {
	height: 56px;
	flex: none;
	padding: 0 20px 8px 27px;
	display: flex;
	align-items: center;
	gap: 25px;
	background: #fff;
	border-bottom: 2px solid #e0e0e0;
	color: #474747;
	font-size: 17.5px;
	letter-spacing: -0.2px;
}
.bm-apps {
	width: 24px;
	height: 24px;
}
.bm-sep {
	width: 2px;
	height: 24px;
	margin: 0 -4px 0 -5px;
	background: #d3e3fd;
}
.bm-sep-end {
	margin-left: auto;
	margin-right: -2px;
}
.bm {
	display: flex;
	align-items: center;
	gap: 10px;
	white-space: nowrap;
}

.app {
	flex: 1;
	min-height: 0;
	display: flex;
}

/* sidebar */
.sidebar {
	width: 390px;
	flex: none;
	display: flex;
	flex-direction: column;
	position: relative;
	background: #f9f9f9;
	font-size: 20px;
	letter-spacing: -0.2px;
}
.side-head {
	height: 84px;
	flex: none;
	padding-top: 27px;
	display: flex;
	align-items: flex-start;
}
.toggle {
	width: 36px;
	height: 27px;
	margin-left: 30px;
	position: relative;
}
.toggle svg {
	width: 36px;
	height: 27px;
}
.toggle-dot {
	position: absolute;
	right: -1px;
	top: -6px;
	width: 12px;
	height: 12px;
	border-radius: 50%;
	background: #0a84ff;
}
.side-search {
	width: 30px;
	height: 30px;
	margin: -1px 0 0 178px;
}
.side-new {
	width: 30px;
	height: 30px;
	margin: -1px 0 0 30px;
}
.side-scroll {
	flex: 1;
	min-height: 0;
	overflow: hidden;
}
.row {
	height: 54px;
	padding-left: 30px;
	display: flex;
	align-items: center;
	gap: 15px;
	white-space: nowrap;
	color: #0d0d0d;
}
.row-icon {
	width: 36px;
	height: 36px;
	flex: none;
	border-radius: 50%;
	display: flex;
	align-items: center;
	justify-content: center;
}
.row-icon svg {
	width: 24px;
	height: 24px;
}
.ring {
	background: #fff;
	border: 1px solid #e5e5e5;
}
.sora {
	background: linear-gradient(170deg, #2c3f80 0, #53679f 35%, #a9aecb 55%, #6a72a8 75%, #2f3a78 100%);
}
.monday {
	background: radial-gradient(circle at 50% 25%, #666 0, #222 50%, #000 100%);
}
.row-count {
	margin-left: auto;
	margin-right: 53px;
	color: #5d5d5d;
}
.label {
	height: 36px;
	margin: 40.5px 0 7px;
	padding-left: 30px;
	display: flex;
	align-items: center;
	font-size: 17px;
	font-weight: 600;
	letter-spacing: -0.2px;
}
.label-projects {
	margin: 44px 0 1px;
	color: #3a3a3a;
}
.chat {
	height: 54.17px;
	width: 331px;
	margin-left: 18px;
	padding: 0 12px;
	display: flex;
	align-items: center;
	border-radius: 15px;
	white-space: nowrap;
}
.chat-text {
	width: 273px;
	flex: none;
	overflow: hidden;
	-webkit-mask-image: linear-gradient(to right, #000 90%, transparent);
	mask-image: linear-gradient(to right, #000 90%, transparent);
}
.chat-active {
	background: #e3e3e3;
}
.chat-more {
	margin-left: 10px;
	display: flex;
	gap: 4px;
}
.chat-more i {
	width: 5px;
	height: 5px;
	border-radius: 50%;
	background: #5d5d5d;
}
.side-foot {
	height: 107px;
	flex: none;
	padding: 27px 0 0 30px;
	display: flex;
	align-items: flex-start;
	gap: 12px;
}
.plans-icon {
	width: 42px;
	height: 42px;
	margin-top: 6px;
	flex: none;
	border-radius: 50%;
	background: #fff;
	border: 1px solid #e5e5e5;
	display: flex;
	align-items: center;
	justify-content: center;
}
.plans-icon svg {
	width: 22px;
	height: 22px;
}
.plans-title {
	line-height: 27px;
}
.plans-sub {
	line-height: 27px;
	font-size: 17px;
	color: #8f8f8f;
}
.sb-thumb {
	position: absolute;
	left: 372px;
	top: 28px;
	width: 13px;
	height: 1443px;
	border-radius: 7px;
	background: #ececec;
}
.sb-arrow-up, .sb-arrow-down, .page-arrow-up, .page-arrow-down {
	position: absolute;
	width: 0;
	height: 0;
	border-left: 7px solid transparent;
	border-right: 7px solid transparent;
}
.sb-arrow-up {
	left: 372px;
	top: 8px;
	border-bottom: 10px solid #e3e3e3;
}
.sb-arrow-down {
	left: 372px;
	top: 1888px;
	border-top: 10px solid #e3e3e3;
}

/* main column */
.chat-main {
	flex: 1;
	min-width: 0;
	display: flex;
	flex-direction: column;
	position: relative;
}
.chat-head {
	height: 70px;
	flex: none;
	padding: 14px 30px 0 36px;
	display: grid;
	grid-template-columns: 1fr auto 1fr;
	align-items: start;
}
.model {
	height: 57px;
	display: flex;
	align-items: center;
	gap: 12px;
	font-size: 26px;
	font-weight: 600;
	color: #5d5d5d;
}
.model svg {
	width: 18px;
	height: 18px;
}
.memory {
	height: 57px;
	display: flex;
	align-items: center;
	gap: 15px;
	font-size: 21px;
	letter-spacing: -0.3px;
	color: #444;
}
.memory svg {
	width: 20px;
	height: 20px;
}
.head-right {
	display: flex;
	align-items: center;
	justify-content: flex-end;
}
.share {
	width: 129px;
	height: 57px;
	border: 1px solid #e5e5e5;
	border-radius: 28px;
	display: flex;
	align-items: center;
	justify-content: center;
	gap: 8px;
	font-size: 20px;
	font-weight: 600;
	letter-spacing: -0.3px;
}
.share svg {
	width: 20px;
	height: 20px;
}
.head-kebab {
	width: 8px;
	height: 28px;
	margin: 0 45px 0 37px;
}
.user {
	width: 48px;
	height: 48px;
	border-radius: 50%;
	background: #2ecc71;
	color: #fff;
	font-size: 19px;
	display: flex;
	align-items: center;
	justify-content: center;
	position: relative;
}
.plus {
	position: absolute;
	right: -6px;
	bottom: -6px;
	padding: 2px 4px;
	border-radius: 9px;
	background: #fff;
	color: #0d0d0d;
	font-size: 11px;
	font-weight: 700;
	box-shadow: 0 1px 3px rgba(0, 0, 0, .2);
}

.thread {
	flex: 1;
	min-height: 0;
	overflow: hidden;
}
.col {
	width: 1151px;
	margin: 0 auto;
	line-height: 36px;
	letter-spacing: -0.6px;
}
h3 {
	margin: 0;
	display: flex;
	align-items: center;
	gap: 17px;
	height: 48px;
	padding-left: 7px;
	font-size: 36px;
	font-weight: 600;
	letter-spacing: -1px;
}
.emoji {
	width: 35px;
	height: 36px;
}
.code-block {
	margin-top: 22px;
	height: 248px;
	border: 1px solid #e3e3e3;
	border-radius: 12px;
	background: #f9f9f9;
	letter-spacing: 0;
}
.code-top {
	height: 56px;
	padding: 0 47px 0 24px;
	display: flex;
	align-items: center;
	justify-content: space-between;
	font-size: 18px;
	letter-spacing: -0.4px;
	color: #5d5d5d;
}
.code-actions {
	display: flex;
	gap: 41px;
}
.code-act {
	display: flex;
	align-items: center;
	gap: 9px;
}
.code-act svg {
	width: 18px;
	height: 18px;
}
.code-body {
	margin: 22px 0 0;
	padding: 0 24px;
	font-family: "Liberation Mono", monospace;
	font-size: 20.5px;
	letter-spacing: -0.75px;
	line-height: 36px;
}
.kw {
	color: #a626a4;
}
.str {
	color: #50a14f;
}
hr {
	height: 2px;
	margin: 59px 0 63px;
	border: 0;
	background: #f2f2f2;
}
.hr-second {
	margin: 60px 0 62px;
}
code {
	padding: 4.5px 9px;
	border-radius: 6px;
	background: #ececec;
	font-family: "Liberation Mono", monospace;
	font-size: 20.5px;
	letter-spacing: -0.75px;
	line-height: 1;
}
ol, ul {
	margin: 0;
	padding: 0;
	list-style: none;
}
.steps {
	margin-top: 25px;
	padding-left: 49px;
	counter-reset: step;
}
.steps > li {
	margin-top: 18px;
	counter-increment: step;
}
.steps > li:first-child {
	margin-top: 0;
}
.steps > li::before {
	content: counter(step) ".";
	display: inline-block;
	width: 36px;
	margin-left: -36px;
	font-weight: 600;
	color: #5d5d5d;
}
.steps ul {
	padding-left: 47px;
}
.steps ul li {
	margin-top: 19px;
}
.steps ul li::before, .offers li::before {
	content: "";
	display: inline-block;
	width: 8px;
	height: 10px;
	border-radius: 50%;
	background: #6e6e6e;
	vertical-align: 2px;
}
.steps ul li::before {
	margin: 0 25px 0 -33px;
}
.intro {
	margin: 26px 0 0;
}
.offers {
	margin-top: 17px;
	padding-left: 53px;
}
.offers li {
	margin-top: 19px;
}
.offers li:first-child {
	margin-top: 0;
}
.offers li::before {
	margin: 0 30px 0 -38px;
}
.emoji-sm {
	display: inline-block;
	width: 23px;
	height: 24px;
	margin-right: 12px;
	vertical-align: -5px;
}
b {
	font-weight: 600;
}
.para-a {
	margin: 30px 0 0;
}
.para-b {
	margin: 18px 0 0;
}
.bubble {
	width: 804px;
	margin: 73px 0 0 347px;
	padding: 18px 28px;
	height: 300px;
	border-radius: 36px;
	background: #f4f4f4;
	white-space: nowrap;
}

/* composer */
.composer {
	width: 1151px;
	height: 154px;
	flex: none;
	margin: 0 auto;
	padding: 25px 18px 0;
	position: relative;
	border: 1px solid #e5e5e5;
	border-radius: 42px;
	background: #fff;
	box-shadow: 0 10px 24px rgba(0, 0, 0, .08);
}
.scroll-down {
	position: absolute;
	left: 551px;
	top: -61px;
	width: 48px;
	height: 48px;
	border: 1px solid #e5e5e5;
	border-radius: 50%;
	background: #fff;
	display: flex;
	align-items: center;
	justify-content: center;
}
.scroll-down svg {
	width: 24px;
	height: 24px;
}
.placeholder {
	height: 36px;
	padding-left: 10px;
	line-height: 36px;
	color: #8f8f8f;
	letter-spacing: -0.6px;
}
.tools {
	margin-top: 21px;
	display: flex;
	gap: 13px;
}
.pill {
	height: 54px;
	padding: 0 14px;
	display: flex;
	align-items: center;
	gap: 7px;
	border: 1px solid #e5e5e5;
	border-radius: 27px;
	font-size: 20px;
	letter-spacing: -0.5px;
	color: #5d5d5d;
	font-weight: 500;
}
.pill svg {
	width: 24px;
	height: 24px;
}
.pill-round {
	width: 53px;
	padding: 0;
	justify-content: center;
}
.dots {
	display: flex;
	gap: 4px;
}
.dots i {
	width: 5px;
	height: 5px;
	border-radius: 50%;
	background: #5d5d5d;
}
.tools-right {
	margin-left: auto;
	display: flex;
	gap: 9px;
}
.send {
	width: 54px;
	height: 54px;
	border-radius: 50%;
	background: #000;
	display: flex;
	align-items: center;
	justify-content: center;
}
.send svg {
	width: 28px;
	height: 28px;
}
.footnote {
	height: 48px;
	flex: none;
	display: flex;
	align-items: center;
	justify-content: center;
	font-size: 18px;
	letter-spacing: -0.4px;
	color: #5d5d5d;
	position: relative;
}
.page-thumb {
	position: absolute;
	left: 3432px;
	top: 1666px;
	width: 13px;
	height: 25px;
	border-radius: 7px;
	background: #ececec;
}
.page-arrow-up {
	left: 3431px;
	top: 8px;
	border-bottom: 10px solid #e3e3e3;
}
.page-arrow-down {
	left: 3431px;
	top: 1723px;
	border-top: 12px solid #e3e3e3;
}

/* taskbar */
.taskbar {
	height: 72px;
	flex: none;
	display: flex;
	align-items: center;
	border-top: 2px solid #b9b9bc;
	background: linear-gradient(to right, #e8e2e6 0, #e5e5e1 10%, #e3e8ef 20%, #ebe1e2 27%, #e4e2ec 33%, #eadfdb 38%, #e3e6f0 50%, #e1e5f1 100%);
}
.weather {
	width: 1322px;
	flex: none;
	padding-left: 31px;
	display: flex;
	align-items: center;
	gap: 14px;
	font-size: 18px;
	line-height: 24px;
	letter-spacing: -0.2px;
}
.weather-icon {
	position: relative;
}
.weather-icon svg {
	width: 32px;
	height: 30px;
	margin-top: 10px;
}
.weather-badge {
	position: absolute;
	left: 16px;
	top: -8px;
	width: 24px;
	height: 24px;
	border-radius: 50%;
	background: #c42b1c;
	color: #fff;
	font-size: 16px;
	font-weight: 600;
	text-align: center;
}
.cond {
	color: #5d5d5d;
}
.task-slot {
	width: 66.2px;
	height: 70px;
	flex: none;
	display: flex;
	align-items: center;
	justify-content: center;
	position: relative;
}
.t-icon {
	width: 36px;
	height: 36px;
}
.chrome {
	width: 44px;
	height: 44px;
}
.task-active::before {
	content: "";
	position: absolute;
	left: 5px;
	right: 5px;
	top: 6px;
	bottom: 2px;
	border-radius: 6px;
	background: rgba(255, 255, 255, .65);
}
.task-active svg {
	position: relative;
}
.run-bar {
	position: absolute;
	left: 23px;
	bottom: 2px;
	width: 22px;
	height: 4px;
	border-radius: 2px;
	background: #0067c0;
}
.run-dot {
	position: absolute;
	left: 30px;
	bottom: 4px;
	width: 6px;
	height: 6px;
	border-radius: 50%;
	background: #777;
}
.count {
	position: absolute;
	left: 31px;
	top: 6px;
	width: 30px;
	height: 28px;
	border-radius: 50%;
	background: #0b6ed1;
	color: #fff;
	font-size: 15px;
	line-height: 28px;
	text-align: center;
}
.task-search {
	width: 326px;
	height: 46px;
	flex: none;
	margin: 0 3.5px 0 6.5px;
	padding: 0 15px 0 16px;
	display: flex;
	align-items: center;
	border: 2px solid #cfc6c2;
	border-radius: 23px;
	background: #f7f3f1;
	font-size: 20px;
	color: #5d5d5d;
	position: relative;
}
.q {
	width: 26px;
	height: 26px;
	margin-right: 14px;
}
.flower {
	width: 50px;
	height: 44px;
	margin-left: auto;
}
.tray {
	margin-left: auto;
	padding-right: 29px;
	display: flex;
	align-items: center;
}
.tray-up {
	width: 18px;
	height: 10px;
	margin-right: 27px;
}
.tray-net {
	width: 24px;
	height: 24px;
	margin-right: 12px;
}
.tray-vol {
	width: 24px;
	height: 24px;
	margin-right: 25px;
}
.clock {
	text-align: right;
	font-size: 18px;
	line-height: 24px;
	letter-spacing: .2px;
}
```
